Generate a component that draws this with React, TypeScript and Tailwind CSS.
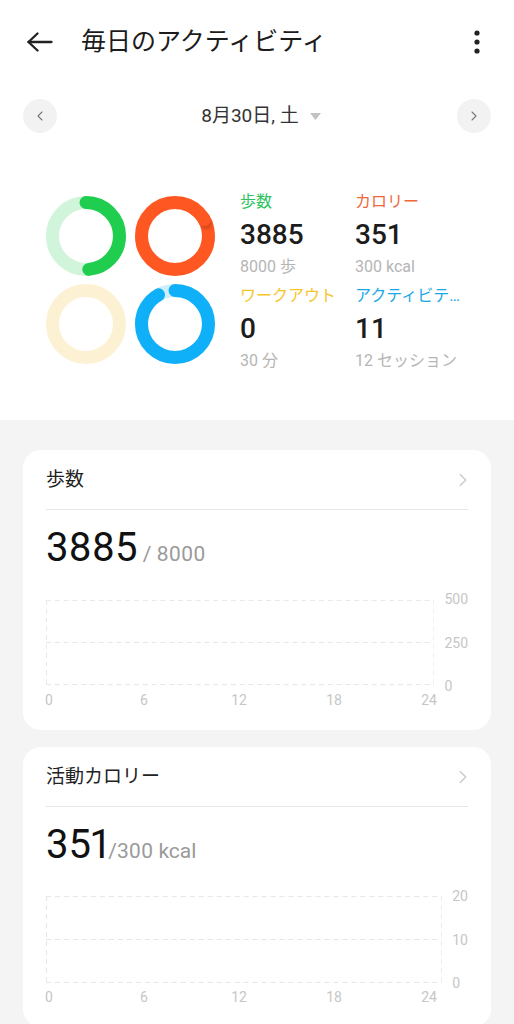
import React from 'react';
import { ChevronLeft, ChevronRight } from 'lucide-react';

const FONT = { fontFamily: 'Roboto, "Noto Sans CJK JP", sans-serif' };

const R = 33.5;
const C = 2 * Math.PI * R;

const Ring = ({ color, track, pct, shadow }: any) => {
  const p = Math.min(pct, 1);
  const over = pct > 1 ? pct - 1 : 0;
  const a = over * 2 * Math.PI;
  const ex = 40 + R * Math.sin(a);
  const ey = 40 - R * Math.cos(a);
  const sx = 40 + R * Math.sin(a + 0.12);
  const sy = 40 - R * Math.cos(a + 0.12);
  return (
    <svg width="80" height="80" viewBox="0 0 80 80">
      <defs>
        <filter id="blur" x="-50%" y="-50%" width="200%" height="200%">
          <feGaussianBlur stdDeviation="1.6" />
        </filter>
      </defs>
      <circle cx="40" cy="40" r={R} fill="none" stroke={track} strokeWidth="13" />
      {p > 0 && (
        <circle
          cx="40"
          cy="40"
          r={R}
          fill="none"
          stroke={color}
          strokeWidth="13"
          strokeLinecap="round"
          strokeDasharray={`${C * p} ${C}`}
          transform="rotate(-90 40 40)"
        />
      )}
      {shadow && over > 0 && (
        <>
          <circle cx={sx} cy={sy} r="5.5" fill="#000" opacity="0.18" filter="url(#blur)" />
          <circle cx={ex} cy={ey} r="6.5" fill={color} />
        </>
      )}
    </svg>
  );
};

const Stat = ({ label, color, value, sub }: any) => (
  <div className="w-[115px]">
    <div className="h-[22px] leading-[22px] text-[16px] whitespace-nowrap" style={{ color }}>{label}</div>
    <div className="h-[44px] leading-[44px] text-[28px] font-medium text-[#1c1c1c]">{value}</div>
    <div className="h-[20px] leading-[20px] text-[16px] text-[#b5b5b5] whitespace-nowrap">{sub}</div>
  </div>
);

const Chart = ({ yLabels }: any) => (
  <div>
    <div className="flex">
      <svg width="397" height="87" viewBox="0 0 397 87">
        <g stroke="#e6e6e6" strokeWidth="1" strokeDasharray="5 4" fill="none">
          <line x1="0" y1="0.5" x2="397" y2="0.5" />
          <line x1="0" y1="43.5" x2="397" y2="43.5" />
          <line x1="0" y1="86.5" x2="397" y2="86.5" />
          <line x1="0.5" y1="0" x2="0.5" y2="87" />
          <line x1="396.5" y1="0" x2="396.5" y2="87" />
        </g>
      </svg>
      <div className="ml-[10px] -my-[8px] flex flex-col justify-between text-[14px] leading-[16px] text-[#c6c6c6]">
        {yLabels.map((l: string) => (
          <span key={l}>{l}</span>
        ))}
      </div>
    </div>
    <div className="mt-[6px] -ml-[7px] flex w-[400px] justify-between text-[14px] leading-[16px] text-[#c6c6c6]">
      {['0', '6', '12', '18', '24'].map((l) => (
        <span key={l} className="w-[20px] text-center">{l}</span>
      ))}
    </div>
  </div>
);

const Card = ({ title, value, rest, yLabels, className }: any) => (
  <div className={`bg-white rounded-[18px] px-[23px] pb-[22px] ${className || ''}`}>
    <div className="h-[60px] flex items-center justify-between border-b border-[#e6e6e6]">
      <span className="text-[19px] text-[#222] pt-[2px]">{title}</span>
      <ChevronRight className="w-[22px] h-[22px] text-[#c8c8c8] -mr-[6px]" strokeWidth={1.4} />
    </div>
    <div className="mt-[18px] flex items-baseline proportional-nums">
      <span className="text-[40px] leading-none text-[#111]">{value}</span>
      <span className="text-[21px] leading-none text-[#9a9a9a]">{rest}</span>
    </div>
    <div className="mt-[31px]">
      <Chart yLabels={yLabels} />
    </div>
  </div>
);

export default function App() {
  return (
    <div className="min-h-screen bg-[#f4f4f4] overflow-hidden" style={FONT}>
      <div className="bg-white h-[420px]">
        {/* header */}
        <div className="h-[84px] flex items-center pl-[27px] pr-[34px]">
          <svg width="26" height="20" viewBox="0 0 26 20" fill="none" stroke="#222" strokeWidth="2.3" strokeLinecap="round" strokeLinejoin="round">
            <path d="M1.5 10H24.5" />
            <path d="M10.5 1.5L1.5 10L10.5 18.5" />
          </svg>
          <span className="ml-[28px] text-[25px] text-[#1c1c1c] flex-1">毎日のアクティビティ</span>
          <svg width="6" height="24" viewBox="0 0 6 24" fill="#222">
            <circle cx="3" cy="3" r="2.6" />
            <circle cx="3" cy="12" r="2.6" />
            <circle cx="3" cy="21" r="2.6" />
          </svg>
        </div>

        {/* date row */}
        <div className="mt-[12px] h-[40px] flex items-center justify-between px-[23px]">
          <div className="w-[34px] h-[34px] rounded-full bg-[#f2f2f2] flex items-center justify-center">
            <ChevronLeft className="w-[16px] h-[16px] text-[#777]" strokeWidth={1.6} />
          </div>
          <div className="flex items-center pl-[8px]">
            <span className="text-[19px] text-[#333]">8月30日, 土</span>
            <svg className="ml-[11px]" width="11" height="7" viewBox="0 0 11 7">
              <path d="M0 0H11L5.5 7Z" fill="#c2c2c2" />
            </svg>
          </div>
          <div className="w-[34px] h-[34px] rounded-full bg-[#f2f2f2] flex items-center justify-center">
            <ChevronRight className="w-[16px] h-[16px] text-[#777]" strokeWidth={1.6} />
          </div>
        </div>

        {/* summary */}
        <div className="mt-[55px] flex pl-[46px]">
          <div className="mt-[5px] grid grid-cols-2 gap-x-[9px] gap-y-[8px] h-fit">
            <Ring color="#1fcd4f" track="#d0f5da" pct={3885 / 8000} />
            <Ring color="#ff5722" track="#ffd7c8" pct={351 / 300} shadow />
            <Ring color="#f7c945" track="#fdf1d4" pct={0} />
            <Ring color="#0fb0f7" track="#cdeefd" pct={11 / 12} />
          </div>
          <div className="ml-[25px] grid grid-cols-2 gap-y-[8px] h-fit">
            <Stat label="歩数" color="#2ec35f" value="3885" sub="8000 歩" />
            <Stat label="カロリー" color="#f0673c" value="351" sub="300 kcal" />
            <Stat label="ワークアウト" color="#f5c62a" value="0" sub="30 分" />
            <Stat label="アクティビテ…" color="#1ba8e6" value="11" sub="12 セッション" />
          </div>
        </div>
      </div>

      <div className="px-[23px] pt-[30px] pb-[20px]">
        <Card title="歩数" value="3885" rest={<>&nbsp;/ 8000</>} yLabels={['500', '250', '0']} />
        <Card className="mt-[17px]" title="活動カロリー" value="351" rest="/300 kcal" yLabels={['20', '10', '0']} />
      </div>
    </div>
  );
}
